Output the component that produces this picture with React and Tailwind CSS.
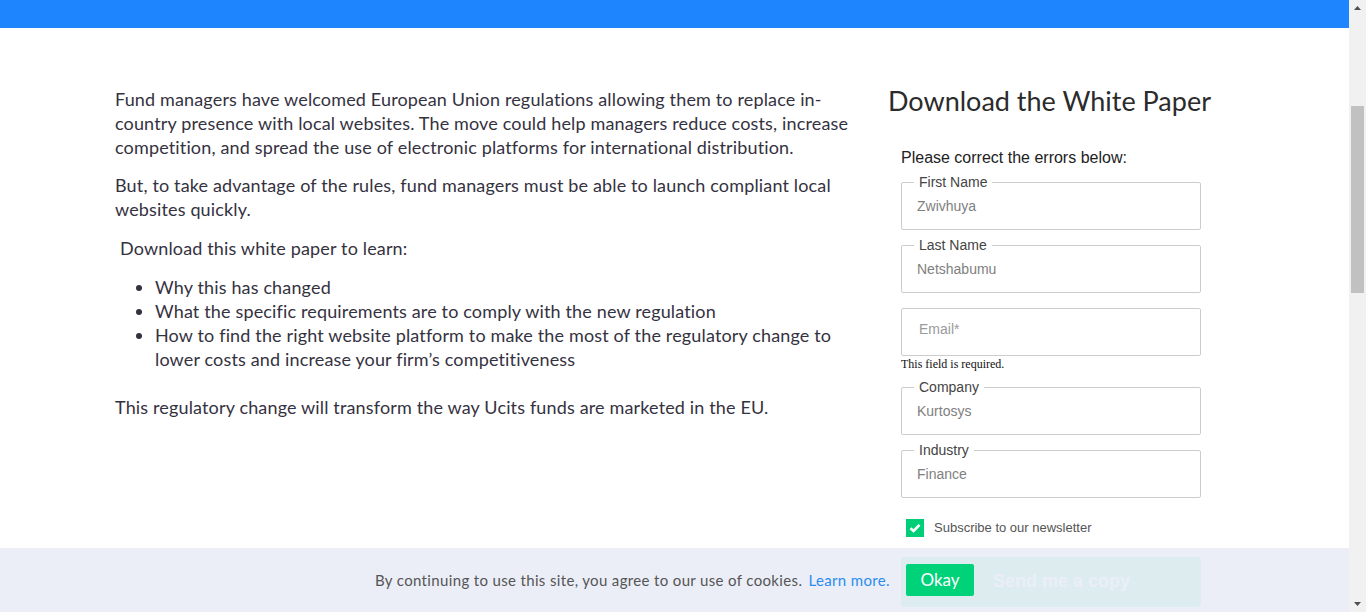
import React from "react";

function Field({ label, value, placeholder }) {
  return (
    <div className="relative h-[48px] w-[300px] rounded-[2px] border border-[#cccccc] bg-white">
      {label && (
        <span className="absolute left-[12px] top-[-9px] bg-white px-[5px] text-[14px] leading-[16px] text-[#444]">
          {label}
        </span>
      )}
      {value && (
        <span className="absolute left-[15px] top-[15px] text-[14px] leading-[16px] text-[#808080]">{value}</span>
      )}
      {placeholder && (
        <span className="absolute left-[17px] top-[12px] text-[14px] leading-[16px] text-[#9a9a9a]">{placeholder}</span>
      )}
    </div>
  );
}

export default function App() {
  return (
    <div className="flex h-[612px] w-[1366px] overflow-hidden bg-white" style={{ fontFamily: "Arial, 'Liberation Sans', sans-serif" }}>
      <div className="relative flex-1">
        <div className="h-[28px] bg-[#1e85ff]" />
        <div className="flex pl-[115px] pt-[60px]">
          <div className="mt-[-1px] w-[745px] font-['Lato',sans-serif] text-[18px] leading-[24px] tracking-[0.15px] text-[#35323f]">
            <p>
              Fund managers have welcomed European Union regulations allowing them to replace in-country presence with local websites. The move could help managers reduce costs, increase competition, and spread the use of electronic platforms for international distribution.
            </p>
            <p className="mt-[14px]">
              But, to take advantage of the rules, fund managers must be able to launch compliant local websites quickly.
            </p>
            <p className="mt-[15px] pl-[5px]">Download this white paper to learn:</p>
            <ul className="mt-[15px] list-disc pl-[40px]">
              <li>Why this has changed</li>
              <li>What the specific requirements are to comply with the new regulation</li>
              <li>How to find the right website platform to make the most of the regulatory change to lower costs and increase your firm’s competitiveness</li>
            </ul>
            <p className="mt-[24px]">This regulatory change will transform the way Ucits funds are marketed in the EU.</p>
          </div>
          <div className="ml-[28px] w-[340px]">
            <h2 className="mt-[-4px] font-['Lato',sans-serif] text-[27px] leading-[34px] text-[#2b2b2b]">Download the White Paper</h2>
            <div className="pl-[13px]">
              <p className="mt-[31px] text-[16px] leading-[18px] text-[#222]">Please correct the errors below:</p>
              <div className="mt-[15px] flex flex-col">
                <Field label="First Name" value="Zwivhuya" />
                <div className="h-[15px]" />
                <Field label="Last Name" value="Netshabumu" />
                <div className="h-[15px]" />
                <Field placeholder="Email*" />
                <p className="mt-[1px] font-['Liberation_Serif',serif] text-[12px] leading-[14px] text-[#111]">This field is required.</p>
                <div className="h-[16px]" />
                <Field label="Company" value="Kurtosys" />
                <div className="h-[15px]" />
                <Field label="Industry" value="Finance" />
                <div className="mt-[20px] flex items-center pl-[5px]">
                  <div className="flex h-[18px] w-[18px] items-center justify-center bg-[#00cf78]">
                    <svg width="12" height="10" viewBox="0 0 12 10">
                      <path d="M1.5 5.2 L4.6 8 L10.5 1.8" fill="none" stroke="white" strokeWidth="2.6" />
                    </svg>
                  </div>
                  <span className="ml-[10px] text-[13px] text-[#555]">Subscribe to our newsletter</span>
                </div>
                <button className="mt-[19px] flex h-[50px] w-[300px] items-center rounded-[3px] bg-[#00d27a] pl-[92px] text-[18px] font-bold text-white">
                  Send me a copy
                </button>
              </div>
            </div>
          </div>
        </div>
        <div className="absolute bottom-0 left-0 right-0 flex h-[64px] items-center justify-center bg-[#eaedf6]/[0.94]">
          <span className="font-['Lato',sans-serif] text-[15px] tracking-[0.35px] text-[#555]">
            By continuing to use this site, you agree to our use of cookies.{" "}
            <span className="ml-[2px] text-[#2a8cf0]">Learn more.</span>
          </span>
          <button className="ml-[16px] h-[32px] w-[68px] rounded-[2px] bg-[#00d27a] font-['Lato',sans-serif] text-[17px] text-white">
            Okay
          </button>
        </div>
      </div>
      <div className="flex w-[17px] flex-col items-center bg-[#f1f1f1]">
        <svg width="17" height="17" viewBox="0 0 17 17">
          <path d="M5 10 L8.5 6 L12 10 Z" fill="#505050" />
        </svg>
        <div className="mt-[89px] h-[187px] w-[13px] bg-[#c1c1c1]" />
        <div className="flex-1" />
        <svg width="17" height="17" viewBox="0 0 17 17">
          <path d="M5 7 L8.5 11 L12 7 Z" fill="#505050" />
        </svg>
      </div>
    </div>
  );
}
